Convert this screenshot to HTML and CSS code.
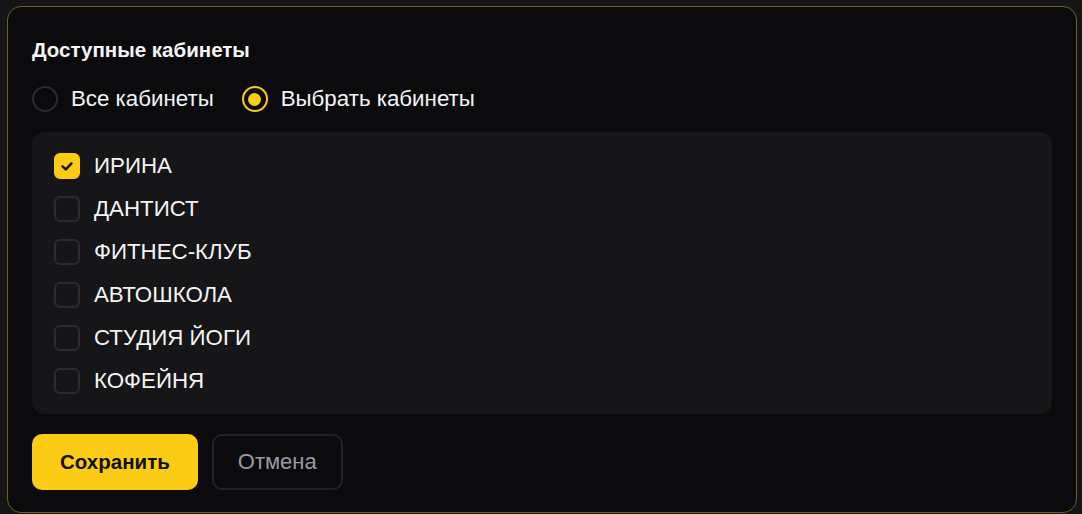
FILE: index.html
```html
<!DOCTYPE html>
<html lang="ru">
<head>
    <meta charset="UTF-8">
    <meta name="viewport" content="width=device-width, initial-scale=1.0">
    <title>Доступные кабинеты</title>
    <link rel="stylesheet" href="styles.css">
</head>
<body>
    <div class="card">
        <h2 class="title">Доступные кабинеты</h2>

        <div class="radio-group">
            <label class="radio">
                <span class="radio-mark"></span>
                <span>Все кабинеты</span>
            </label>
            <label class="radio checked">
                <span class="radio-mark"></span>
                <span>Выбрать кабинеты</span>
            </label>
        </div>

        <div class="room-list">
            <label class="room checked">
                <span class="check-box">
                    <svg viewBox="0 0 24 24" width="18" height="18"><polyline points="6 12.5 10.5 16.5 18 8.5" fill="none" stroke="#111" stroke-width="3.2" stroke-linecap="round" stroke-linejoin="round"/></svg>
                </span>
                <span>ИРИНА</span>
            </label>
            <label class="room"><span class="check-box"></span><span>ДАНТИСТ</span></label>
            <label class="room"><span class="check-box"></span><span>ФИТНЕС-КЛУБ</span></label>
            <label class="room"><span class="check-box"></span><span>АВТОШКОЛА</span></label>
            <label class="room"><span class="check-box"></span><span>СТУДИЯ ЙОГИ</span></label>
            <label class="room"><span class="check-box"></span><span>КОФЕЙНЯ</span></label>
        </div>

        <div class="actions">
            <button class="btn btn-save">Сохранить</button>
            <button class="btn btn-cancel">Отмена</button>
        </div>
    </div>
</body>
</html>
```

FILE: styles.css
```css
body {
    margin: 0;
    background-color: #151518;
    font-family: "Liberation Sans", Arial, sans-serif;
    color: #f4f4f5;
}
.card {
    margin: 6px 5px 0 7px;
    padding: 29px 24px 22px;
    background-color: #0b0b0d;
    border: 1px solid #735f1a;
    border-radius: 14px;
}
.title {
    margin: 0;
    font-size: 20.5px;
    font-weight: bold;
    line-height: 28px;
}
.radio-group {
    display: flex;
    gap: 28px;
    margin-top: 21px;
    height: 28px;
    align-items: center;
}
.radio {
    display: flex;
    align-items: center;
    gap: 13px;
    font-size: 22.3px;
}
.radio-mark {
    width: 22px;
    height: 22px;
    border: 2px solid #2c2c30;
    border-radius: 50%;
    display: flex;
    align-items: center;
    justify-content: center;
}
.radio.checked .radio-mark {
    border-color: #facc15;
}
.radio.checked .radio-mark::after {
    content: "";
    width: 13px;
    height: 13px;
    border-radius: 50%;
    background-color: #facc15;
}
.room-list {
    margin-top: 19px;
    padding: 21px 22px 20px;
    background-color: #161618;
    border-radius: 12px;
    display: flex;
    flex-direction: column;
    gap: 17px;
}
.room {
    display: flex;
    align-items: center;
    gap: 14px;
    height: 26px;
    font-size: 22.3px;
}
.check-box {
    width: 22px;
    height: 22px;
    border: 2px solid #2c2c30;
    border-radius: 6px;
    display: flex;
    align-items: center;
    justify-content: center;
}
.room.checked .check-box {
    background-color: #facc15;
    border-color: #facc15;
}
.actions {
    display: flex;
    gap: 14px;
    margin-top: 20px;
}
.btn {
    height: 56px;
    border-radius: 10px;
    font-family: "Liberation Sans", Arial, sans-serif;
    cursor: pointer;
}
.btn-save {
    padding: 0 28px;
    background-color: #facc15;
    color: #111;
    border: none;
    font-size: 20.5px;
    font-weight: bold;
}
.btn-cancel {
    padding: 0 24px;
    background-color: transparent;
    color: #9a9aa2;
    border: 2px solid #222225;
    font-size: 22px;
}
```
